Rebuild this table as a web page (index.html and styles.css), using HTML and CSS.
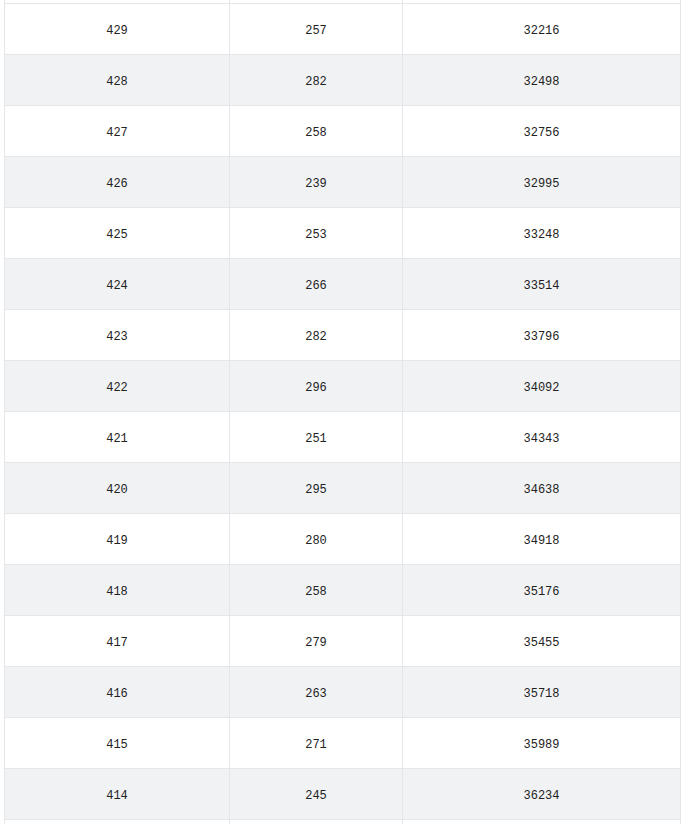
FILE: index.html
```html
<!DOCTYPE html>
<html>
<head>
<meta charset="utf-8">
<link rel="stylesheet" href="styles.css">
</head>
<body>
<div class="table">
  <div class="row stub alt"><div class="cell"></div><div class="cell"></div><div class="cell"></div></div>
  <div class="row"><div class="cell">429</div><div class="cell">257</div><div class="cell">32216</div></div>
  <div class="row alt"><div class="cell">428</div><div class="cell">282</div><div class="cell">32498</div></div>
  <div class="row"><div class="cell">427</div><div class="cell">258</div><div class="cell">32756</div></div>
  <div class="row alt"><div class="cell">426</div><div class="cell">239</div><div class="cell">32995</div></div>
  <div class="row"><div class="cell">425</div><div class="cell">253</div><div class="cell">33248</div></div>
  <div class="row alt"><div class="cell">424</div><div class="cell">266</div><div class="cell">33514</div></div>
  <div class="row"><div class="cell">423</div><div class="cell">282</div><div class="cell">33796</div></div>
  <div class="row alt"><div class="cell">422</div><div class="cell">296</div><div class="cell">34092</div></div>
  <div class="row"><div class="cell">421</div><div class="cell">251</div><div class="cell">34343</div></div>
  <div class="row alt"><div class="cell">420</div><div class="cell">295</div><div class="cell">34638</div></div>
  <div class="row"><div class="cell">419</div><div class="cell">280</div><div class="cell">34918</div></div>
  <div class="row alt"><div class="cell">418</div><div class="cell">258</div><div class="cell">35176</div></div>
  <div class="row"><div class="cell">417</div><div class="cell">279</div><div class="cell">35455</div></div>
  <div class="row alt"><div class="cell">416</div><div class="cell">263</div><div class="cell">35718</div></div>
  <div class="row"><div class="cell">415</div><div class="cell">271</div><div class="cell">35989</div></div>
  <div class="row alt"><div class="cell">414</div><div class="cell">245</div><div class="cell">36234</div></div>
  <div class="row tail"><div class="cell"></div><div class="cell"></div><div class="cell"></div></div>
</div>
</body>
</html>
```
FILE: styles.css
```css
html, body {
  margin: 0;
  padding: 0;
  background: #ffffff;
  height: 824px;
  overflow: hidden;
}
.table {
  margin-left: 4px;
  width: 676px;
  border-left: 1px solid #e4e6ea;
  font-family: "Liberation Mono", "DejaVu Sans Mono", monospace;
  font-size: 12px;
  color: #222222;
}
.row {
  display: grid;
  grid-template-columns: 225px 173px 278px;
  height: 51px;
  box-sizing: border-box;
  border-bottom: 1px solid #e4e6ea;
  background: #ffffff;
}
.row.alt {
  background: #f1f2f4;
}
.row.stub {
  height: 4px;
  background: #ffffff;
}
.row.tail {
  height: 10px;
  border-bottom: none;
}
.cell {
  box-sizing: border-box;
  border-right: 1px solid #e4e6ea;
  display: flex;
  align-items: center;
  justify-content: center;
  padding-top: 3px;
}
```
